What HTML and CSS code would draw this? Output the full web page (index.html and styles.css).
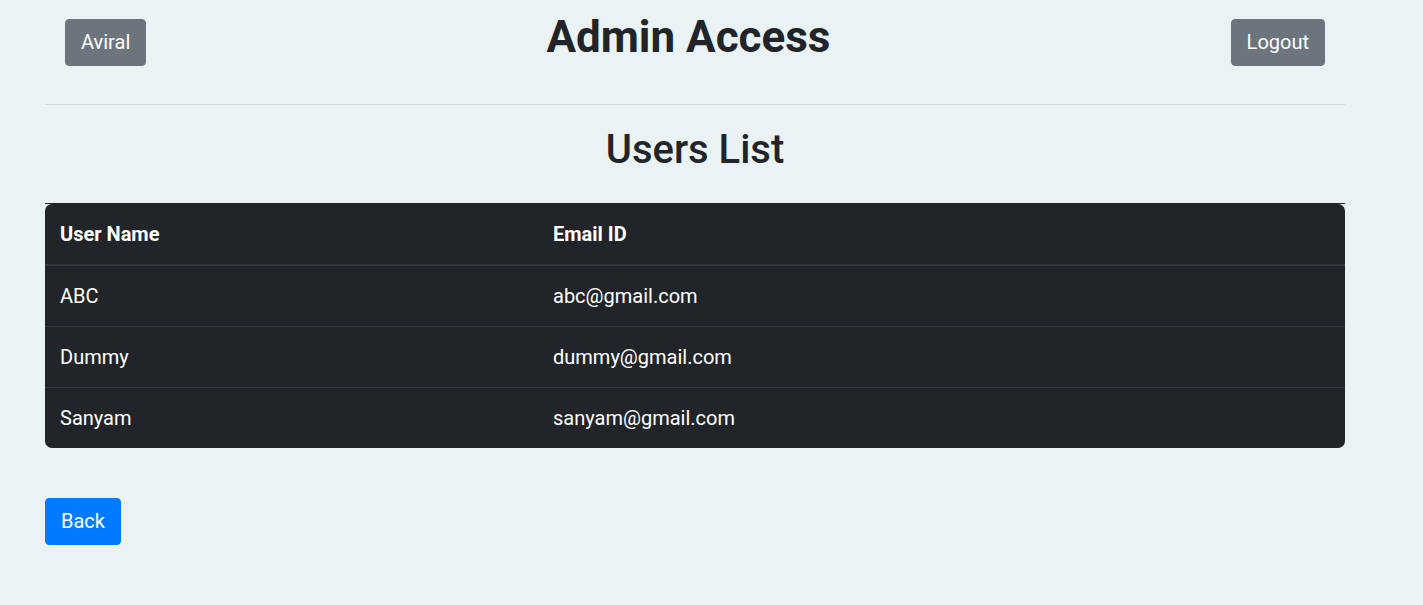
FILE: index.html
```html
<!DOCTYPE html>
<html lang="en">
<head>
<meta charset="utf-8">
<title>Admin Access</title>
<link rel="stylesheet" href="styles.css">
</head>
<body>
<div class="page">
  <header class="topbar">
    <button class="btn btn-secondary">Aviral</button>
    <h1 class="title">Admin Access</h1>
    <button class="btn btn-secondary">Logout</button>
  </header>
  <hr class="divider">
  <h2 class="subtitle">Users List</h2>
  <div class="table-wrap">
    <table class="users">
      <thead>
        <tr><th class="col-name">User Name</th><th>Email ID</th></tr>
      </thead>
      <tbody>
        <tr><td>ABC</td><td>abc@gmail.com</td></tr>
        <tr><td>Dummy</td><td>dummy@gmail.com</td></tr>
        <tr><td>Sanyam</td><td>sanyam@gmail.com</td></tr>
      </tbody>
    </table>
  </div>
  <div class="actions">
    <button class="btn btn-primary">Back</button>
  </div>
</div>
</body>
</html>
```
FILE: styles.css
```css
* { box-sizing: border-box; }
html, body {
  margin: 0;
  padding: 0;
  background: #ebf2f4;
  font-family: Roboto, "Liberation Sans", Arial, sans-serif;
  color: #212529;
}
.page {
  width: 1300px;
  margin-left: 45px;
}
.topbar {
  display: flex;
  justify-content: space-between;
  align-items: flex-start;
  padding: 11px 20px 0 20px;
}
.btn {
  font-family: inherit;
  font-size: 20px;
  line-height: 30px;
  padding: 7px 15px 8px 15px;
  border: 1px solid transparent;
  border-radius: 4px;
  color: #fff;
  cursor: pointer;
}
.topbar .btn { margin-top: 8px; }
.btn-secondary { background: #6c757d; border-color: #6c757d; }
.btn-primary { background: #007bff; border-color: #007bff; }
.title {
  margin: 0;
  font-size: 44px;
  font-weight: 700;
  line-height: 53px;
}
.divider {
  margin: 38px 0 0 0;
  border: 0;
  border-top: 1px solid rgba(0, 0, 0, 0.1);
}
.subtitle {
  margin: 21px 0 0 0;
  text-align: center;
  font-size: 40px;
  font-weight: 500;
  line-height: 48px;
}
.table-wrap {
  margin-top: 29px;
  border-top: 1px solid #212529;
}
.users {
  width: 100%;
  border-collapse: separate;
  border-spacing: 0;
  background: #212529;
  color: #fff;
  font-size: 20px;
  line-height: 30px;
  border-radius: 7px;
  overflow: hidden;
}
.users th, .users td {
  text-align: left;
  padding: 15px;
  vertical-align: top;
}
.users th { font-weight: 700; border-bottom: 2px solid #32383e; }
.users tbody tr + tr td { border-top: 1px solid #32383e; }
.col-name { width: 493px; }
.actions { margin-top: 50px; }
```
